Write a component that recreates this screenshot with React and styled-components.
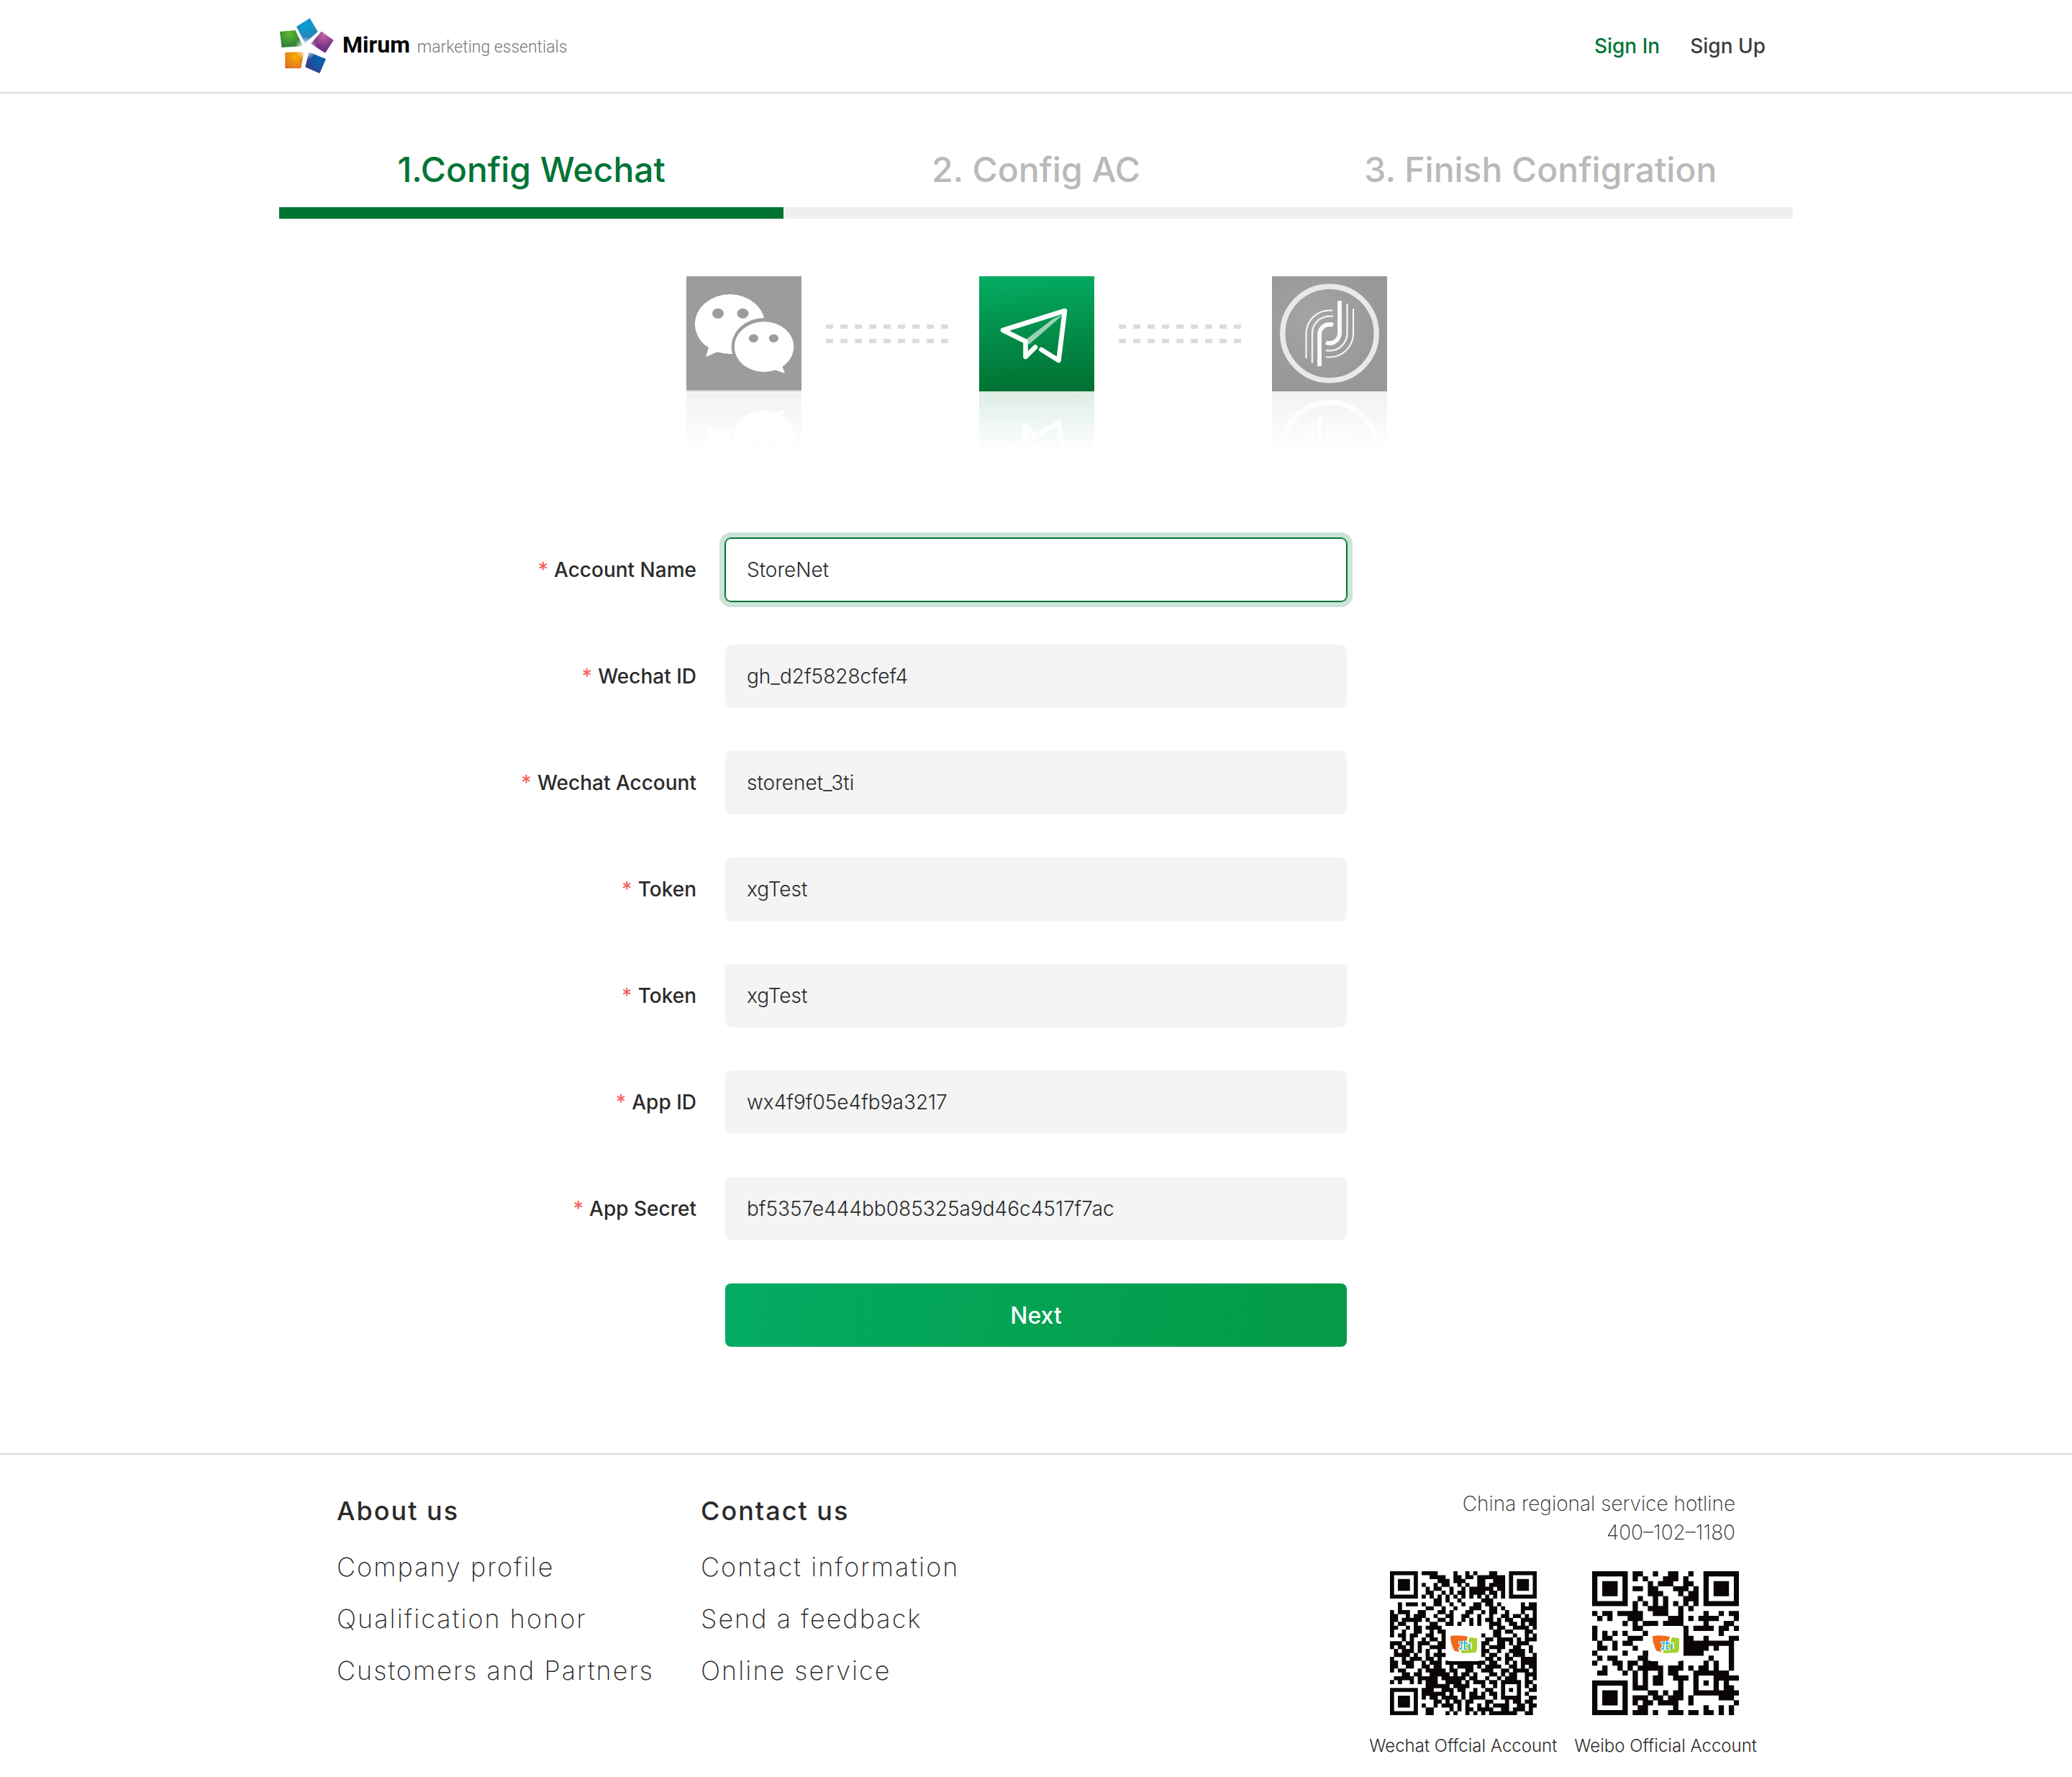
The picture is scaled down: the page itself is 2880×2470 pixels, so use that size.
import React, { useId } from "react";
import styled, { createGlobalStyle, css } from "styled-components";

const GlobalStyle = createGlobalStyle`
  *, *::before, *::after { box-sizing: border-box; }
  body {
    margin: 0;
    background: #fff;
    color: #2b2b2b;
    font-family: Inter, "Liberation Sans", sans-serif;
    font-size: 28px;
  }
  a { color: inherit; text-decoration: none; }
  ul, ol, figure, h2, p { margin: 0; padding: 0; }
  ul, ol { list-style: none; }
`;

const container = css`
  width: 100%;
  max-width: 2104px;
  margin: 0 auto;
`;

/* ---------- header ---------- */

const Header = styled.header`
  border-bottom: 2px solid #dcdcdc;
`;

const HeaderInner = styled.div`
  ${container}
  display: flex;
  align-items: center;
  justify-content: space-between;
  min-height: 128px;
  padding-right: 38px;
`;

const Brand = styled.a`
  display: flex;
  align-items: center;
  gap: 12px;
`;

const BrandText = styled.span`
  display: flex;
  align-items: baseline;
  gap: 10px;
  padding-bottom: 4px;
  font-family: Roboto, "Liberation Sans", sans-serif;
`;

const BrandName = styled.strong`
  font-size: 32px;
  font-weight: 700;
  color: #000;
`;

const BrandTagline = styled.span`
  font-size: 23px;
  font-weight: 300;
  color: #777;
`;

const AuthNav = styled.nav`
  display: flex;
  gap: 42px;
`;

const AuthLink = styled.a`
  font-size: 28px;
  font-weight: 500;
  line-height: 40px;
  color: ${(p) => (p.$active ? "#007435" : "#3d3d3d")};
`;

/* ---------- steps ---------- */

const Main = styled.main`
  ${container}
  padding-top: 76px;
`;

const Steps = styled.ol`
  display: grid;
  grid-template-columns: repeat(3, 1fr);
`;

const Step = styled.li`
  padding-bottom: 22px;
  border-bottom: 16px solid ${(p) => (p.$active ? "#007435" : "#efefef")};
  color: ${(p) => (p.$active ? "#007435" : "#b9b9b9")};
  font-size: 48px;
  font-weight: 500;
  line-height: 60px;
  text-align: center;
`;

/* ---------- illustration ---------- */

const Flow = styled.div`
  display: flex;
  justify-content: center;
  align-items: center;
  margin-top: 80px;
  padding-left: 2px;
`;

const Tile = styled.svg`
  display: block;
  width: 160px;
  height: 160px;
  -webkit-box-reflect: below 0 linear-gradient(transparent 46%, rgba(0, 0, 0, 0.13));
`;

const Dashes = styled.svg`
  display: block;
  width: 170px;
  height: 26px;
  margin: 0 43px 0 34px;
`;

/* ---------- form ---------- */

const Form = styled.form`
  display: grid;
  grid-template-columns: 1fr minmax(0, 864px) 1fr;
  column-gap: 40px;
  row-gap: 60px;
  margin-top: 204px;
  padding-bottom: 148px;
`;

const Label = styled.label`
  display: flex;
  grid-column: 1;
  align-items: center;
  justify-content: flex-end;
  gap: 8px;
  font-weight: 500;
`;

const Required = styled.span`
  color: #f5605d;
`;

const Input = styled.input`
  grid-column: 2;
  width: 100%;
  height: 88px;
  padding: 0 30px;
  border: 0;
  border-radius: 8px;
  outline: 0;
  background: #f4f4f4;
  color: #2b2b2b;
  font: 300 28px Inter, "Liberation Sans", sans-serif;

  ${(p) =>
    p.$active &&
    css`
      background: #fff;
      box-shadow: inset 0 0 0 1px #007435, 0 0 0 1px #007435, 0 0 0 8px #cce3d7;
    `}
`;

const NextButton = styled.button`
  grid-column: 2;
  height: 88px;
  border: 0;
  border-radius: 8px;
  background: linear-gradient(100deg, #03ab62, #049a45);
  color: #fff;
  font: 500 32px Inter, "Liberation Sans", sans-serif;
  cursor: pointer;
`;

/* ---------- footer ---------- */

const Footer = styled.footer`
  border-top: 2px solid #dcdcdc;
`;

const FooterInner = styled.div`
  ${container}
  display: flex;
  justify-content: space-between;
  padding: 42px 50px 28px 80px;
`;

const FooterColumns = styled.div`
  display: grid;
  grid-template-columns: 506px auto;
`;

const FooterHeading = styled.h2`
  margin-bottom: 6px;
  font-size: 36px;
  font-weight: 500;
  line-height: 72px;
  letter-spacing: 2px;
`;

const FooterLink = styled.a`
  display: block;
  font-size: 36px;
  font-weight: 200;
  line-height: 72px;
  letter-spacing: 2px;
`;

const Hotline = styled.p`
  padding: 6px 30px 0 0;
  font-weight: 200;
  line-height: 40px;
  text-align: right;
`;

const QrList = styled.div`
  display: flex;
  gap: 24px;
  margin-top: 34px;
`;

const QrFigure = styled.figure`
  display: flex;
  flex-direction: column;
  align-items: center;
`;

const QrImage = styled.svg`
  display: block;
  width: 204px;
  height: 200px;
`;

const QrCaption = styled.figcaption`
  margin-top: 28px;
  font-size: 24px;
  font-weight: 300;
  line-height: 30px;
`;

/* ---------- drawings ---------- */

function Logo() {
  const id = useId();
  const pieces = [
    ["green", "1,19 22.5,17 33,39 3.5,41", "#5fb82f", "#2a7f3b", 14, 22],
    ["blue", "24,12 42.7,.3 53.7,19 36,35", "#00a3cf", "#2f7fb8", 37, 10],
    ["purple", "58.7,18.7 75.7,31 64,48.7 44,35.7", "#c85fa0", "#6c2f85", 62, 24],
    ["navy", "65,57 56.3,77 36.3,68.3 41.3,47.3", "#0068b4", "#31408f", 56, 58],
    ["orange", "8.3,48 34.7,46.7 30.3,70 8.3,70", "#f8b000", "#dd6a2c", 22, 54],
  ];
  return (
    <svg width="76" height="78" viewBox="0 0 76 78" aria-hidden="true">
      <defs>
        {pieces.map(([name, , from, to, x, y]) => (
          <radialGradient key={name} id={id + name} gradientUnits="userSpaceOnUse" cx={x} cy={y} r="19">
            <stop offset="0" stopColor={from} />
            <stop offset="1" stopColor={to} />
          </radialGradient>
        ))}
        <radialGradient id={id + "glow"}>
          <stop offset=".25" stopColor="#fff" />
          <stop offset="1" stopColor="#fff" stopOpacity="0" />
        </radialGradient>
      </defs>
      {pieces.map(([name, points]) => (
        <polygon key={name} points={points} fill={`url(#${id + name})`} />
      ))}
      <circle cx="37" cy="42" r="16" fill={`url(#${id}glow)`} />
    </svg>
  );
}

function WechatTile() {
  return (
    <Tile viewBox="0 0 160 160" role="img" aria-label="Wechat">
      <path fill="#9c9c9c" d="M0 0h160v160H0z" />
      <path fill="#c6c6c6" d="M0 158h160v2H0z" />
      <ellipse cx="60.5" cy="66.5" rx="48.5" ry="41.5" fill="#fff" />
      <path fill="#fff" d="M31 99l-4 13 17-7z" />
      <ellipse cx="44" cy="51.7" rx="8" ry="7" fill="#9c9c9c" />
      <ellipse cx="78.5" cy="51.7" rx="8" ry="7" fill="#9c9c9c" />
      <ellipse cx="108" cy="98" rx="45.3" ry="40" fill="#9c9c9c" />
      <ellipse cx="108" cy="98" rx="41.3" ry="35" fill="#fff" />
      <path fill="#fff" d="M133 124l4 11-14-5z" />
      <ellipse cx="93.4" cy="86.3" rx="6.6" ry="5.7" fill="#9c9c9c" />
      <ellipse cx="121.4" cy="86.3" rx="6.6" ry="5.7" fill="#9c9c9c" />
    </Tile>
  );
}

function PlaneTile() {
  const id = useId();
  return (
    <Tile viewBox="0 0 160 160" role="img" aria-label="Send">
      <defs>
        <linearGradient id={id} x1="0" y1="0" x2=".06" y2="1">
          <stop offset="0" stopColor="#04ac62" />
          <stop offset="1" stopColor="#007233" />
        </linearGradient>
      </defs>
      <path fill={`url(#${id})`} d="M0 0h160v160H0z" />
      <path fill="#fff" fillOpacity=".6" d="M103 59l14-6-48 42-4-7z" />
      <path
        d="M86.500 102L110.500 117 119 48 33 75 64.500 90.500V112L78 98.500"
        fill="none"
        stroke="#fff"
        strokeWidth="6.600"
        strokeLinecap="round"
        strokeLinejoin="round"
      />
    </Tile>
  );
}

function RoundTile() {
  const id = useId();
  return (
    <Tile viewBox="0 0 160 160" role="img" aria-label="Finish">
      <defs>
        <radialGradient id={id} cx=".4" cy=".4" r=".55">
          <stop offset="0" stopColor="#a6a6a6" />
          <stop offset="1" stopColor="#989898" />
        </radialGradient>
      </defs>
      <path fill={`url(#${id})`} d="M0 0h160v160H0z" />
      <g fill="none" stroke="#fbfbfb">
        <circle cx="80" cy="79.500" r="65.200" stroke="#e9e9e9" strokeWidth="7.400" />
        <path strokeWidth="5.800" d="M94 34v45a14 14 0 0 1-14 14q-3 0-5-1M66 125V81a14 14 0 0 1 14-14q3 0 5 1" />
        <path strokeWidth="2.600" stroke="#ededed" d="M104.500 38v41A24.500 24.500 0 0 1 80 103.500q-3 0-5-.5M56 120.500V80a24 24 0 0 1 24-24.500h5" />
        <path strokeWidth="2" d="M113 45v34a33 33 0 0 1-33 33.500h-5M47.500 114V80A32.500 32.500 0 0 1 80 47.500h4" />
      </g>
    </Tile>
  );
}

function DashedLines() {
  return (
    <Dashes viewBox="0 0 170 26" aria-hidden="true">
      <path d="M0 3h170M0 23h170" stroke="#dcdcdc" strokeWidth="6" strokeDasharray="10 10" />
    </Dashes>
  );
}

const WECHAT_QR = [
  "#######.####....#..#.#...##...#######",
  "#.....#...####..##.##.#######.#.....#",
  "#.###.#.....###.###...##..###.#.###.#",
  "#.###.#.#..#.##..#.#..##.####.#.###.#",
  "#.###.#..#.##..#..#.######.##.#.###.#",
  "#.....#..##..#.#.##.####.##.#.#.....#",
  "#######.#.#.#.#.#.#.#.#.#.#.#.#######",
  "...........##.#..#.....###...........",
  "..#.###.#..##..#..#..##.##.#.....#.##",
  "..#......##..#..#...###..##.#....####",
  "#.###..##...##.#...##..#.##..#...#..#",
  "##..#.###..#..##..##..#..#..##.##.#.#",
  "##.#####.#..##.#..#.#.#.##.#.##..####",
  "#.##..#...##..##.#..#.#..###..##.#.##",
  "##..#.##.####............#.##..####.#",
  "#..#..##..#.##............##.##...##.",
  "#.##.##..##..#.........#..##...#..#.#",
  "...#.#..#.##.#..........##.####.#.###",
  "###.##.###..##.........##..##.#.###..",
  "#.##.#.#..####.........#.####..##..#.",
  ".#.###.#.#..#..........##..#..####.#.",
  ".####.#..#.###.........#.##..#.###..#",
  "#..#.###.##.#...........##.#.##..####",
  "##.###..#.###.##########.##..#.#.####",
  "##..##..##.##..#.####.#.####..##.#.##",
  "#.##...#.#####.##..##..###..##.####.#",
  "...##.##..#####.#.##.#...##.#.##..###",
  ".#####.#####.######.##..#..#.###..#.#",
  "#.#..#.#.###..####.#.###.##.#####.##.",
  ".........######.####...#..#.#...#.#.#",
  "#######.###..###.##..#..##..#.#.#..##",
  "#.....#.######.#..#.##.#.##.#...#.#..",
  "#.###.#.#.##.####.#.####..#.#####..##",
  "#.###.#....##.#.##.##...##...#.##.##.",
  "#.###.#.#..#.###.#.#..#.#.####..##.##",
  "#.....#..##....#.#.##.####..##.###.#.",
  "#######..##...#.#..#.#.#.#######..##.",
];

const WEIBO_QR = [
  "#######.##..#..##..#..#######",
  "#.....#.#.#...###.#...#.....#",
  "#.###.#....#.###..##..#.###.#",
  "#.###.#.##.##...###.#.#.###.#",
  "#.###.#....###...#.##.#.###.#",
  "#.....#..#..#.#...###.#.....#",
  "#######.#.#.#.#.#.#.#.#######",
  "........#..####..#.#.........",
  "#.##.#####..###..#....#..#.##",
  ".#.#...###.....###.#.####...#",
  "......#.#.###.####....#...##.",
  "#.......##........#.####.##.#",
  "#.#.#.#...#.......#......#...",
  "#.##...###........##..#....##",
  ".#..#.##..........##########.",
  ".##.#...#.........#####.#..#.",
  "#.....#...##......####.....#.",
  ".#.##....##............#...#.",
  "#...##.##.###....#....#.#..#.",
  "..#..#.#.#####.###.#.##.#..#.",
  ".##...#.#.#..#.##...#######..",
  "........#.#.##..###.#...#####",
  "#######.#.#.##...#..#.#.#.#..",
  "#.....#.###......#..#...#.##.",
  "#.###.#....##.#.##..#########",
  "#.###.#.###.##.###.#.....###.",
  "#.###.#.#.##.####..#........#",
  "#.....#..##.....#.....#..#.#.",
  "#######.###.#..###.##.##.#.#.",
];

function QrCode({ rows, label }) {
  const size = rows.length;
  const modules = rows
    .map((row, y) =>
      [...row].map((cell, x) => (cell === "#" ? `M${x} ${y}h1.04v1.04h-1.04z` : "")).join("")
    )
    .join("");
  return (
    <QrImage viewBox="0 0 204 200" role="img" aria-label={label}>
      <path d={modules} fill="#0a0606" transform={`scale(${204 / size} ${200 / size})`} />
      <rect x="78" y="76" width="49" height="49" rx="5" fill="#fff" />
      <path fill="#f26a1b" d="M84 90q11-2 24 1l-2 8-9 3-1 10-6-1q-6-9-6-21z" />
      <path fill="#a5d22d" d="M99 99h9l3-7 10 1v16l-2 4-20 1z" />
      <path fill="none" stroke="#fff" strokeWidth="3.500" d="M95 99h5v9h-5m9-12v12h4m4-9v9M100 100h10" />
      <path fill="none" stroke="#3cb9d8" strokeWidth="2" d="M96 99h4l-1 9h-3m8-12v12h3m-5-8h6m3 0v8" />
    </QrImage>
  );
}

/* ---------- page ---------- */

const FIELDS = [
  ["Account Name", "StoreNet"],
  ["Wechat ID", "gh_d2f5828cfef4"],
  ["Wechat Account", "storenet_3ti"],
  ["Token", "xgTest"],
  ["Token", "xgTest"],
  ["App ID", "wx4f9f05e4fb9a3217"],
  ["App Secret", "bf5357e444bb085325a9d46c4517f7ac"],
];

const FOOTER_LINKS = [
  ["About us", ["Company profile", "Qualification honor", "Customers and Partners"]],
  ["Contact us", ["Contact information", "Send a feedback", "Online service"]],
];

export default function App() {
  return (
    <>
      <GlobalStyle />
      <Header>
        <HeaderInner>
          <Brand href="#home">
            <Logo />
            <BrandText>
              <BrandName>Mirum</BrandName>
              <BrandTagline>marketing essentials</BrandTagline>
            </BrandText>
          </Brand>
          <AuthNav>
            <AuthLink href="#sign-in" $active>Sign In</AuthLink>
            <AuthLink href="#sign-up">Sign Up</AuthLink>
          </AuthNav>
        </HeaderInner>
      </Header>

      <Main>
        <Steps>
          <Step $active aria-current="step">1.Config Wechat</Step>
          <Step>2. Config AC</Step>
          <Step>3. Finish Configration</Step>
        </Steps>

        <Flow>
          <WechatTile />
          <DashedLines />
          <PlaneTile />
          <DashedLines />
          <RoundTile />
        </Flow>

        <Form onSubmit={(e) => e.preventDefault()}>
          {FIELDS.map(([label, value], i) => (
            <React.Fragment key={i}>
              <Label htmlFor={`field-${i}`}>
                <Required>*</Required>
                {label}
              </Label>
              <Input id={`field-${i}`} type="text" defaultValue={value} $active={i === 0} />
            </React.Fragment>
          ))}
          <NextButton type="submit">Next</NextButton>
        </Form>
      </Main>

      <Footer>
        <FooterInner>
          <FooterColumns>
            {FOOTER_LINKS.map(([heading, links]) => (
              <section key={heading}>
                <FooterHeading>{heading}</FooterHeading>
                <ul>
                  {links.map((link) => (
                    <li key={link}>
                      <FooterLink href="#info">{link}</FooterLink>
                    </li>
                  ))}
                </ul>
              </section>
            ))}
          </FooterColumns>
          <div>
            <Hotline>
              China regional service hotline
              <br />
              400–102–1180
            </Hotline>
            <QrList>
              <QrFigure>
                <QrCode rows={WECHAT_QR} label="Wechat QR code" />
                <QrCaption>Wechat Offcial Account</QrCaption>
              </QrFigure>
              <QrFigure>
                <QrCode rows={WEIBO_QR} label="Weibo QR code" />
                <QrCaption>Weibo Official Account</QrCaption>
              </QrFigure>
            </QrList>
          </div>
        </FooterInner>
      </Footer>
    </>
  );
}
